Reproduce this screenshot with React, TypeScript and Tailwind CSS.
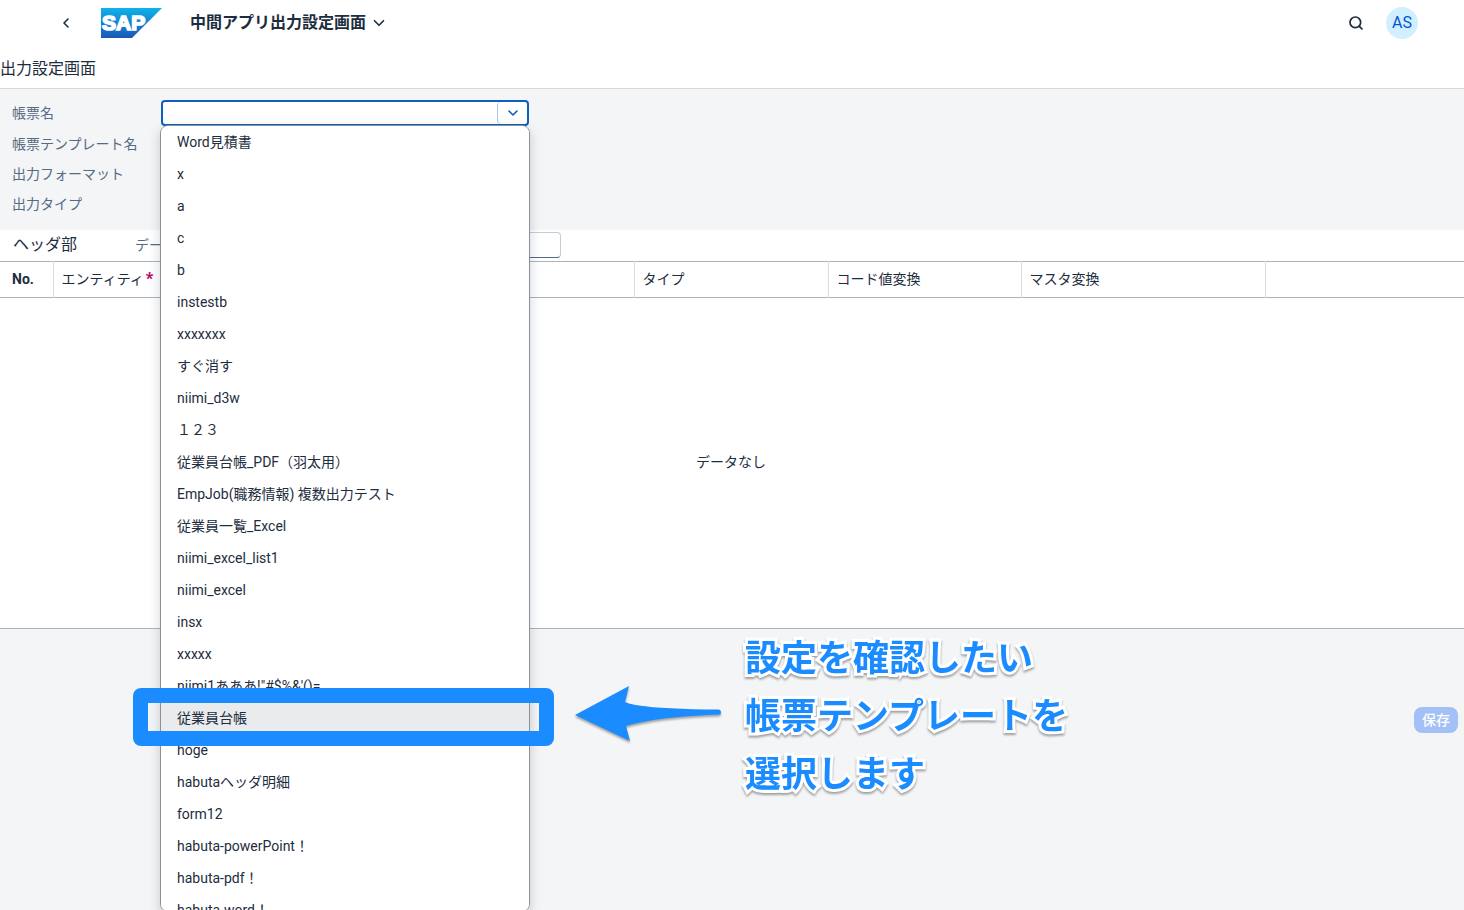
import { ChevronDown, ChevronLeft, Search } from "lucide-react";

const reports = [
  "Word見積書",
  "x",
  "a",
  "c",
  "b",
  "instestb",
  "xxxxxxx",
  "すぐ消す",
  "niimi_d3w",
  "１２３",
  "従業員台帳_PDF（羽太用）",
  "EmpJob(職務情報) 複数出力テスト",
  "従業員一覧_Excel",
  "niimi_excel_list1",
  "niimi_excel",
  "insx",
  "xxxxx",
  "niimi1あああ!\"#$%&'()=",
  "従業員台帳",
  "hoge",
  "habutaヘッダ明細",
  "form12",
  "habuta-powerPoint！",
  "habuta-pdf！",
  "habuta-word！",
];

const selectedReport = "従業員台帳";

function SapLogo() {
  return (
    <svg width="61" height="30" viewBox="0 0 61 30" role="img" aria-label="SAP">
      <defs>
        <linearGradient id="sap-fill" x1="0" y1="0" x2="0" y2="1">
          <stop offset="0" stopColor="#10b2ea" />
          <stop offset="0.5" stopColor="#1284d2" />
          <stop offset="1" stopColor="#1c58b8" />
        </linearGradient>
      </defs>
      <path d="M0 0H61L31 30H0Z" fill="url(#sap-fill)" />
      <text
        x="1"
        y="22"
        fontFamily="'Liberation Sans', sans-serif"
        fontWeight="700"
        fontSize="21"
        fill="#fff"
        stroke="#fff"
        strokeWidth="1.700"
      >
        SAP
      </text>
    </svg>
  );
}

function ShellBar() {
  return (
    <header className="flex h-[46px] items-center bg-white pr-[46px] pl-14">
      <button type="button" aria-label="戻る" className="flex h-8 w-5 items-center justify-center">
        <ChevronLeft size={16} strokeWidth={2.4} />
      </button>
      <a href="#home" className="ml-[25px]">
        <SapLogo />
      </a>
      <button type="button" className="ml-7 flex items-center gap-1 text-base font-bold">
        中間アプリ出力設定画面
        <ChevronDown size={18} strokeWidth={2.2} />
      </button>
      <button type="button" aria-label="検索" className="ml-auto flex size-8 items-center justify-center">
        <Search size={16} strokeWidth={2.6} />
      </button>
      <button
        type="button"
        className="ml-[14px] flex size-8 items-center justify-center rounded-full bg-[#d1efff] text-base text-[#0057d2]"
      >
        AS
      </button>
    </header>
  );
}

function ReportCombo() {
  return (
    <div className="relative w-[368px]">
      <div className="flex h-[26px] overflow-hidden rounded border-2 border-[#0f5fc0] bg-white">
        <input
          id="report"
          type="text"
          role="combobox"
          aria-expanded="true"
          aria-controls="report-list"
          className="min-w-0 flex-1 px-2 text-sm outline-none"
        />
        <button
          type="button"
          aria-label="候補を表示"
          className="flex w-[30px] items-center justify-center rounded-l border-l border-[#a9c6e8] text-[#0a5bc4]"
        >
          <ChevronDown size={16} strokeWidth={2.4} />
        </button>
      </div>
      <ul
        id="report-list"
        role="listbox"
        aria-label="帳票名"
        className="absolute top-[25px] -left-px z-10 max-h-[calc(100vh-123px)] w-[370px] overflow-y-auto rounded-lg border border-[#8b919b] bg-white text-[#1d2d3e] shadow-[0_4px_12px_rgba(34,53,72,0.22)] [scrollbar-width:none]"
      >
        {reports.map((name) => (
          <li
            key={name}
            role="option"
            aria-selected={name === selectedReport}
            className="flex h-8 items-center px-4 text-sm whitespace-nowrap aria-selected:bg-[#e9ebec]"
          >
            {name}
          </li>
        ))}
      </ul>
    </div>
  );
}

function SettingsForm() {
  return (
    <section className="h-[141px] px-3 pt-[11px] text-sm text-[#556b82]">
      <div className="flex h-[26px] items-center">
        <label htmlFor="report" className="w-[149px]">
          帳票名
        </label>
        <ReportCombo />
      </div>
      <div className="flex flex-col pt-[3px]">
        <div className="flex h-[30px] items-center">帳票テンプレート名</div>
        <div className="flex h-[30px] items-center">出力フォーマット</div>
        <div className="flex h-[30px] items-center">出力タイプ</div>
      </div>
    </section>
  );
}

function HeaderTable() {
  return (
    <section className="bg-white">
      <div className="flex h-[31px] items-center pb-px pl-[13px]">
        <h2 className="w-[122px] text-base">ヘッダ部</h2>
        <label htmlFor="source" className="w-16 text-sm text-[#556b82]">
          データ
        </label>
        <input
          id="source"
          type="text"
          className="h-[26px] w-[362px] rounded border border-[#c5ccd4] border-b-[#556b82] bg-white px-2 text-sm"
        />
      </div>
      <table className="w-full table-fixed border-collapse text-sm">
        <colgroup>
          <col className="w-[53px]" />
          <col className="w-[581px]" />
          <col className="w-[194px]" />
          <col className="w-[193px]" />
          <col className="w-[244px]" />
          <col />
        </colgroup>
        <thead>
          <tr className="h-9 border-y border-[#a8b3bd] text-left *:border-r *:border-[#d9dde1] *:px-2 *:pb-0.5 *:font-normal *:last:border-r-0">
            <th scope="col">
              <span className="pl-1 font-bold">No.</span>
            </th>
            <th scope="col">
              エンティティ<span className="pl-0.5 text-base leading-none font-black text-[#ba066c]">*</span>
            </th>
            <th scope="col">タイプ</th>
            <th scope="col">コード値変換</th>
            <th scope="col">マスタ変換</th>
            <td />
          </tr>
        </thead>
        <tbody>
          <tr className="h-[331px] border-b border-[#a8b3bd]">
            <td colSpan={6} className="pr-0.5 pb-0.5 text-center">
              データなし
            </td>
          </tr>
        </tbody>
      </table>
    </section>
  );
}

function Annotation() {
  return (
    <div className="pointer-events-none absolute top-[640px] left-[133px] z-20 text-[#1a8cff]">
      <div className="absolute top-12 left-0 h-[58px] w-[421px] rounded-lg border-[15px] border-[#1a8cff]" />
      <svg
        width="150"
        height="62"
        viewBox="0 0 150 62"
        className="absolute top-11 left-[440px] drop-shadow-[0_2px_1px_rgba(0,0,0,0.35)]"
        aria-hidden="true"
      >
        <path
          d="M2 31L56 2L52 18Q68 25 146 25.500Q148 26 148 28Q148 30.500 146 30.500Q82 33 53 42L57 57Z"
          fill="currentColor"
        />
      </svg>
      <p className="absolute -top-2.5 left-[612px] text-4xl leading-[58px] font-bold whitespace-nowrap drop-shadow-[0_2px_1px_rgba(0,0,0,0.35)] [paint-order:stroke_fill] [-webkit-text-stroke:6px_white]">
        設定を確認したい
        <br />
        帳票テンプレートを
        <br />
        選択します
      </p>
    </div>
  );
}

export default function App() {
  return (
    <div className="relative min-h-screen overflow-hidden bg-[#f4f5f7] font-[Roboto,'Noto_Sans_CJK_JP',sans-serif] text-[#1d2d3e]">
      <ShellBar />
      <div className="flex h-[43px] items-center border-b border-[#d9d9d9] bg-white pt-[3px]">
        <h1 className="text-base">出力設定画面</h1>
      </div>
      <main>
        <SettingsForm />
        <HeaderTable />
      </main>
      <footer className="flex justify-end px-1.5 pt-[78px]">
        <button type="button" disabled className="h-[26px] rounded-lg bg-[#a3c1f7] px-2 text-sm font-medium text-white">
          保存
        </button>
      </footer>
      <Annotation />
    </div>
  );
}
